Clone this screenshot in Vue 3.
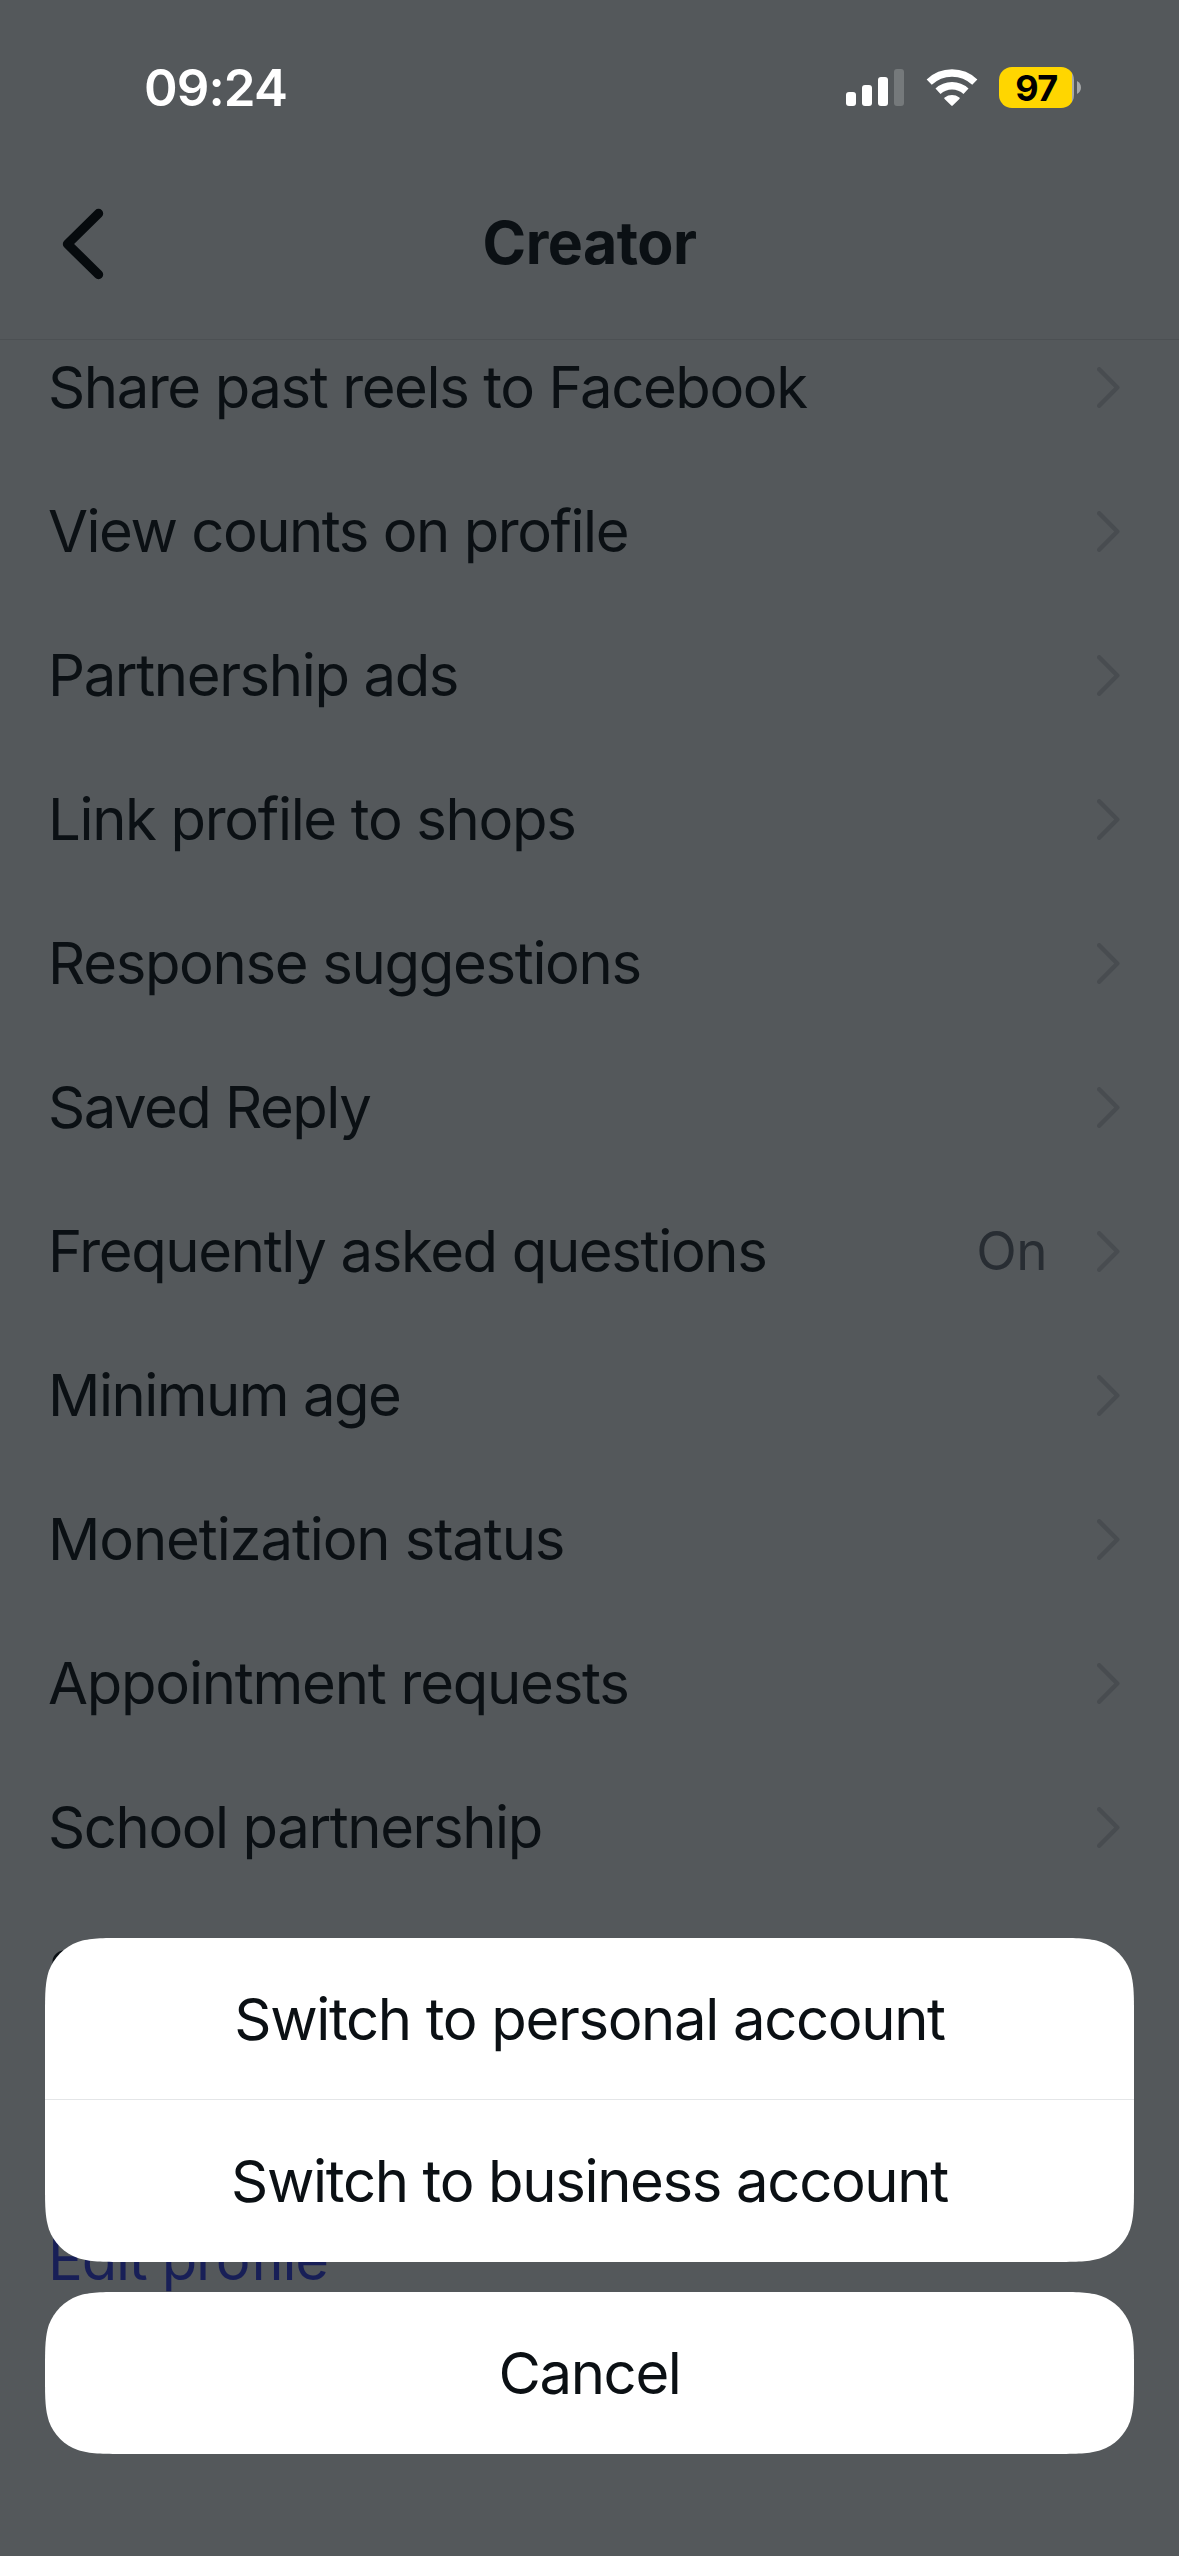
<script setup>
const rows = [
  { label: 'Share past reels to Facebook', tracking: -1.4 },
  { label: 'View counts on profile', tracking: -1.47 },
  { label: 'Partnership ads', tracking: -1.38 },
  { label: 'Link profile to shops', tracking: -1.33 },
  { label: 'Response suggestions', tracking: -1.33 },
  { label: 'Saved Reply', tracking: -1.5 },
  { label: 'Frequently asked questions', value: 'On', tracking: -1.35 },
  { label: 'Minimum age', tracking: -1.5 },
  { label: 'Monetization status', tracking: -1.12 },
  { label: 'Appointment requests', tracking: -1.23 },
  { label: 'School partnership', tracking: -1.42 },
]

// Continuous-curvature corners for the sheet cards.
function squircle(w, h, r) {
  const pts = [[1.528665, 0], [1.088493, 0], [0.868407, 0], [0.631494, 0.074911], [0.372824, 0.16906], [0.16906, 0.372824], [0.074911, 0.631494], [0, 0.868407], [0, 1.088493], [0, 1.528665]]
  const corner = (list, fx, fy) => list.map(([x, y]) => `${fx(x * r).toFixed(2)} ${fy(y * r).toFixed(2)}`)
  const keep = (v) => v
  const fromRight = (v) => w - v
  const fromBottom = (v) => h - v
  const rev = [...pts].reverse()
  const seg = (p) => `L${p[0]} C${p.slice(1, 4).join(' ')} C${p.slice(4, 7).join(' ')} C${p.slice(7, 10).join(' ')}`
  const all = [
    corner(pts, keep, keep),
    corner(rev, keep, fromBottom),
    corner(pts, fromRight, fromBottom),
    corner(rev, fromRight, keep),
  ]
  // seg() handles three curves: the middle one is given by points 4-6.
  return `path("M${all[0][0]} ${all.map(seg).join(' ')} Z")`
}
const optionsClip = squircle(1089, 324, 52)
const cancelClip = squircle(1089, 162, 52)
</script>

<template>
  <div class="screen">
    <header class="top">
      <div class="status">
        <span class="time">09:24</span>
        <div class="indicators">
          <svg class="cell" width="58" height="37" viewBox="0 0 58 37">
            <rect x="0" y="23" width="10" height="14" rx="3" fill="#fff" />
            <rect x="16" y="16" width="10" height="21" rx="3" fill="#fff" />
            <rect x="32" y="8" width="10" height="29" rx="3" fill="#fff" />
            <rect x="48" y="0" width="10" height="37" rx="3" fill="#75797b" />
          </svg>
          <svg class="wifi" width="52" height="37" viewBox="0 0 52 37">
            <g fill="none" stroke="#fff" stroke-width="7.4">
              <path d="M3.200 13.200A33 33 0 0 1 48.800 13.200" />
              <path d="M12 22.300A20.500 20.500 0 0 1 40 22.300" />
            </g>
            <path d="M18.600 30a1 1 0 0 1 .1-1.500a12 12 0 0 1 14.600 0a1 1 0 0 1 .1 1.500L26.700 36.600a1 1 0 0 1-1.400 0z" fill="#fff" />
          </svg>
          <div class="battery"><span>97</span></div>
          <svg class="nub" width="4" height="13" viewBox="0 0 4 13"><path d="M0 0C5.300 2.400 5.300 10.600 0 13z" fill="#a6a8a9" /></svg>
        </div>
      </div>
      <div class="nav">
        <svg class="back" width="42" height="72" viewBox="0 0 42 72">
          <path d="M36.500 5.500L5.500 36L36.500 66.500" fill="none" stroke="#060a0d" stroke-width="9.400" stroke-linecap="round" stroke-linejoin="round" />
        </svg>
        <h1>Creator</h1>
      </div>
    </header>

    <main class="content">
      <ul class="list">
        <li v-for="row in rows" :key="row.label" class="row">
          <span class="label" :style="{ letterSpacing: row.tracking + 'px' }">{{ row.label }}</span>
          <span v-if="row.value" class="value">{{ row.value }}</span>
          <svg class="chevron" width="23" height="41" viewBox="0 0 23 41">
            <path d="M2.200 2.300L20.300 20.500L2.200 38.700" fill="none" stroke="#484c50" stroke-width="4.400" stroke-linecap="round" stroke-linejoin="round" />
          </svg>
        </li>
        <li class="row"><span class="label">Switch</span></li>
        <li class="row"></li>
        <li class="row link"><span class="label">Edit profile</span></li>
      </ul>
    </main>

    <div class="sheet">
      <div class="card" :style="{ clipPath: optionsClip }">
        <button class="divided">Switch to personal account</button>
        <button>Switch to business account</button>
      </div>
      <div class="card" :style="{ clipPath: cancelClip }">
        <button>Cancel</button>
      </div>
    </div>
  </div>
</template>

<style>
body { margin: 0; background: #54585b; }
</style>

<style scoped>
.screen {
  position: relative;
  display: flex;
  flex-direction: column;
  width: 1179px;
  height: 2556px;
  overflow: hidden;
  background: #54585b;
  color: #0b1014;
  font-family: Inter, "Liberation Sans", sans-serif;
}
.top {
  box-sizing: border-box;
  height: 340px;
  flex: none;
  border-bottom: 1px solid #4c5053;
}
.status {
  display: flex;
  align-items: center;
  justify-content: space-between;
  height: 175px;
  padding: 0 98px 0 144px;
}
.time {
  color: #fff;
  font-size: 51px;
  font-weight: 560;
  letter-spacing: -0.9px;
}
.indicators { display: flex; align-items: center; }
.wifi { margin-left: 22px; }
.battery {
  display: flex;
  align-items: center;
  justify-content: center;
  box-sizing: border-box;
  width: 75px;
  height: 41px;
  margin-left: 21px;
  border-radius: 13px;
  background: linear-gradient(to right, #ffd600 73px, #a6a8a9 73px);
  color: #000;
  font-size: 36px;
  font-weight: 700;
  letter-spacing: -0.6px;
}
.nub { margin-left: 3px; }
.nav {
  display: grid;
  grid-template-columns: 117px 1fr 117px;
  align-items: center;
  height: 138px;
}
.back { margin-left: 62px; }
h1 {
  margin: 0;
  padding-bottom: 3px;
  text-align: center;
  font-size: 59px;
  font-weight: 700;
  letter-spacing: -0.5px;
}
.content { flex: 1; min-height: 0; overflow: hidden; }
.list { list-style: none; margin: -25px 0 0; padding: 0; }
.row {
  display: flex;
  align-items: center;
  height: 144px;
  padding: 0 59px 0 48px;
}
.label { flex: 1; font-size: 58px; letter-spacing: -1.2px; white-space: nowrap; }
.value { margin-right: 50px; color: #282d33; font-size: 53px; letter-spacing: -0.5px; }
.link { color: #181f57; }
.sheet {
  position: absolute;
  left: 45px;
  bottom: 102px;
  display: flex;
  flex-direction: column;
  gap: 30px;
  width: 1089px;
}
.card { background: #fff; }
button {
  display: block;
  box-sizing: border-box;
  width: 100%;
  height: 162px;
  margin: 0;
  padding: 0;
  border: 0;
  background: none;
  color: #0b1014;
  font: 400 58px Inter, "Liberation Sans", sans-serif;
  letter-spacing: -1.34px;
}
.divided { border-bottom: 1px solid #e4e6e8; }
</style>
